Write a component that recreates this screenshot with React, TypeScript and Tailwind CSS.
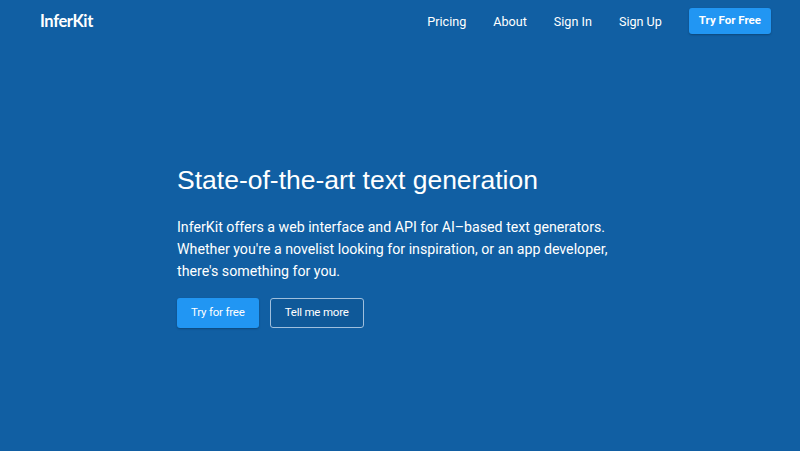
import React from 'react'

const navLinks = ['Pricing', 'About', 'Sign In', 'Sign Up']

const App: React.FC = () => {
  return (
    <div
      className="flex h-[451px] w-full flex-col bg-[#115fa3] text-white"
      style={{ fontFamily: 'Roboto, "Noto Sans", sans-serif' }}
    >
      <header className="flex h-[42px] items-center justify-between pl-10 pr-[29px]">
        <div className="text-[16.5px] font-bold tracking-[-0.4px]" style={{ fontFamily: 'Lato, sans-serif' }}>
          InferKit
        </div>
        <nav className="flex items-center">
          {navLinks.map((link) => (
            <a key={link} href="#" className="mr-[27px] pt-[2px] text-[12.6px] text-white">
              {link}
            </a>
          ))}
          <button className="h-[26px] rounded-[3px] bg-[#2196f3] px-[10px] text-[11.5px] font-bold text-white shadow-[0_1px_2px_rgba(0,0,0,0.25)]">
            Try For Free
          </button>
        </nav>
      </header>

      <main className="flex-1 pt-[121px]">
        <div className="ml-[177px]">
          <h1 className="text-[26.5px] leading-[34px] font-normal" style={{ fontFamily: '"Liberation Sans", Arial, sans-serif' }}>
            State-of-the-art text generation
          </h1>
          <p className="mt-[19px] w-[450px] text-[14.2px] leading-[22px]">
            InferKit offers a web interface and API for AI–based text generators. Whether you're a novelist
            looking for inspiration, or an app developer, there's something for you.
          </p>
          <div className="mt-[16px] flex gap-[11px]">
            <button className="h-[30px] rounded-[3px] bg-[#2196f3] px-[14px] text-[11.5px] tracking-[-0.2px] text-white shadow-[0_1px_2px_rgba(0,0,0,0.25)]">
              Try for free
            </button>
            <button className="h-[30px] rounded-[3px] border border-[#9fbfdd] bg-[#0f5999] px-[14px] text-[11.5px] tracking-[-0.2px] text-white">
              Tell me more
            </button>
          </div>
        </div>
      </main>
    </div>
  )
}

export default App
